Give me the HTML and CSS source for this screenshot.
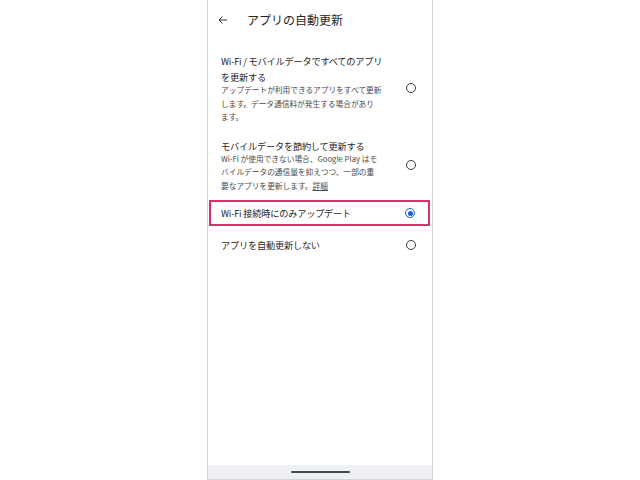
FILE: index.html
```html
<!DOCTYPE html>
<html lang="ja">
<head>
<meta charset="utf-8">
<title>アプリの自動更新</title>
<link rel="stylesheet" href="styles.css">
</head>
<body>
<div class="stage">
  <div class="phone">
    <header class="topbar">
      <svg class="back" width="12" height="12" viewBox="0 0 24 24"><path d="M20 12H5M11 5l-7 7 7 7" fill="none" stroke="#303030" stroke-width="2"/></svg>
      <h1 class="title">アプリの自動更新</h1>
    </header>
    <div class="list">
      <div class="item">
        <div class="text">
          <div class="label">Wi-Fi / モバイルデータですべてのアプリを更新する</div>
          <div class="desc">アップデートが利用できるアプリをすべて更新<br>します。データ通信料が発生する場合があり<br>ます。</div>
        </div>
        <span class="radio"></span>
      </div>
      <div class="item">
        <div class="text">
          <div class="label">モバイルデータを節約して更新する</div>
          <div class="desc">Wi-Fi が使用できない場合、Google Play はモ<br>バイルデータの通信量を抑えつつ、一部の重<br>要なアプリを更新します。<span class="link">詳細</span></div>
        </div>
        <span class="radio"></span>
      </div>
      <div class="item item-selected">
        <div class="text">
          <div class="label">Wi-Fi 接続時にのみアップデート</div>
        </div>
        <span class="radio radio-on"></span>
      </div>
      <div class="item item-last">
        <div class="text">
          <div class="label">アプリを自動更新しない</div>
        </div>
        <span class="radio"></span>
      </div>
    </div>
    <div class="navbar"><span class="handle"></span></div>
  </div>
</div>
</body>
</html>
```

FILE: styles.css
```css
html, body {
  margin: 0;
  padding: 0;
  background: #ffffff;
}
body {
  font-family: "Noto Sans CJK JP", "Noto Sans", Roboto, sans-serif;
  color: #262626;
}
.stage {
  width: 640px;
  height: 480px;
  display: flex;
  justify-content: center;
}
.phone {
  width: 224px;
  height: 480px;
  border-left: 1px solid #d4d4d4;
  border-right: 1px solid #d4d4d4;
  display: flex;
  flex-direction: column;
  background: #fff;
}
.topbar {
  height: 40px;
  display: flex;
  align-items: center;
  padding-left: 9px;
}
.back {
  display: block;
}
.title {
  margin: 0 0 0 18px;
  font-size: 12px;
  font-weight: 400;
  line-height: 16px;
}
.list {
  flex: 1;
  padding-top: 6px;
}
.item {
  display: flex;
  align-items: center;
  padding: 7px 16px 7px 13px;
}
.text {
  width: 166px;
  flex: none;
}
.label {
  font-size: 9.2px;
  line-height: 16px;
  letter-spacing: -0.2px;
}
.desc {
  margin-top: -2px;
  font-size: 7.7px;
  line-height: 13.5px;
  color: #4a4a4a;
  white-space: nowrap;
}
.link {
  text-decoration: underline;
}
.radio {
  margin-left: auto;
  width: 8px;
  height: 8px;
  border: 1.5px solid #3a3a3a;
  border-radius: 50%;
  flex: none;
  position: relative;
}
.radio-on {
  border-color: #1a5fd0;
}
.radio-on::after {
  content: "";
  position: absolute;
  left: 1.5px;
  top: 1.5px;
  width: 5px;
  height: 5px;
  border-radius: 50%;
  background: #1a5fd0;
}
.item-selected {
  margin: 1px 2px 0 1px;
  padding: 3px 13px 3px 10px;
  border: 2px solid #d9306f;
}
.item-last {
  padding-top: 11px;
}
.navbar {
  height: 14px;
  background: #eef0f4;
  display: flex;
  justify-content: center;
  align-items: center;
  border-bottom: 1px solid #d4d4d4;
}
.handle {
  width: 59px;
  height: 2.5px;
  border-radius: 2px;
  background: #444a52;
}
```
